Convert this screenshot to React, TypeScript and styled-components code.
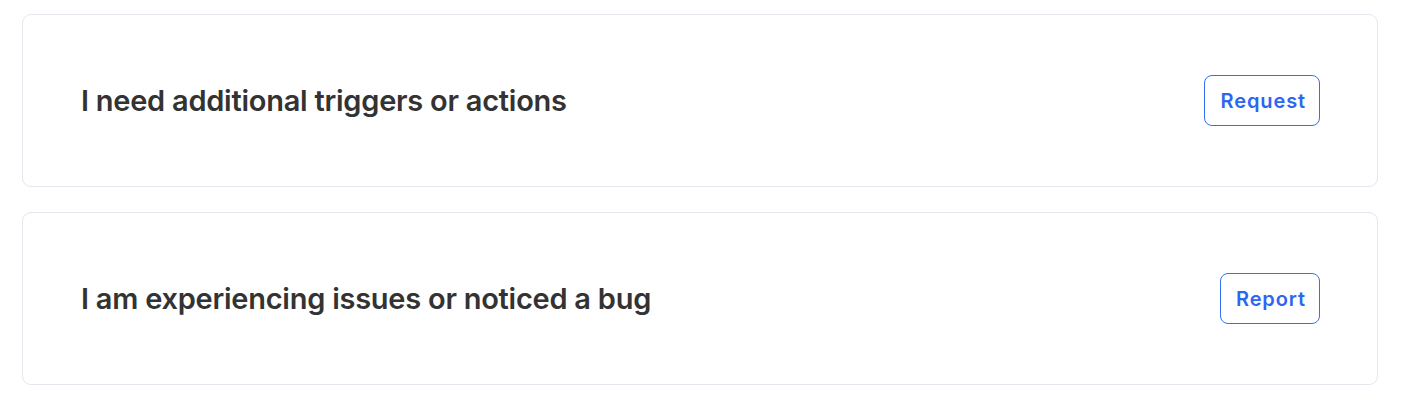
import React from "react";
import styled, { createGlobalStyle } from "styled-components";

const Global = createGlobalStyle`
  html, body { margin: 0; padding: 0; background: #ffffff; }
  body { font-family: Inter, "Noto Sans", sans-serif; }
  * { box-sizing: border-box; }
`;

const Page = styled.div`
  display: flex;
  flex-direction: column;
  gap: 25px;
  padding: 14px 24px 0 22px;
`;

const Card = styled.div`
  display: flex;
  align-items: center;
  justify-content: space-between;
  height: 173px;
  padding: 0 57px 0 58px;
  border: 1px solid #e4e6ee;
  border-radius: 9px;
  background: #ffffff;
`;

const Title = styled.h2`
  margin: 0;
  font-family: Inter, sans-serif;
  font-size: 29px;
  font-weight: 600;
  letter-spacing: -0.25px;
  color: #333333;
`;

const ActionButton = styled.button`
  height: 51px;
  padding: 0 13px 0 15px;
  border: 1px solid #3470f1;
  border-radius: 8px;
  background: #ffffff;
  color: #2b67f0;
  font-family: Inter, sans-serif;
  font-size: 20px;
  font-weight: 600;
  letter-spacing: 0.9px;
  cursor: pointer;
`;

const items = [
  { title: "I need additional triggers or actions", action: "Request" },
  { title: "I am experiencing issues or noticed a bug", action: "Report" },
];

export default function App() {
  return (
    <>
      <Global />
      <Page>
        {items.map((it) => (
          <Card key={it.action}>
            <Title>{it.title}</Title>
            <ActionButton>{it.action}</ActionButton>
          </Card>
        ))}
      </Page>
    </>
  );
}
